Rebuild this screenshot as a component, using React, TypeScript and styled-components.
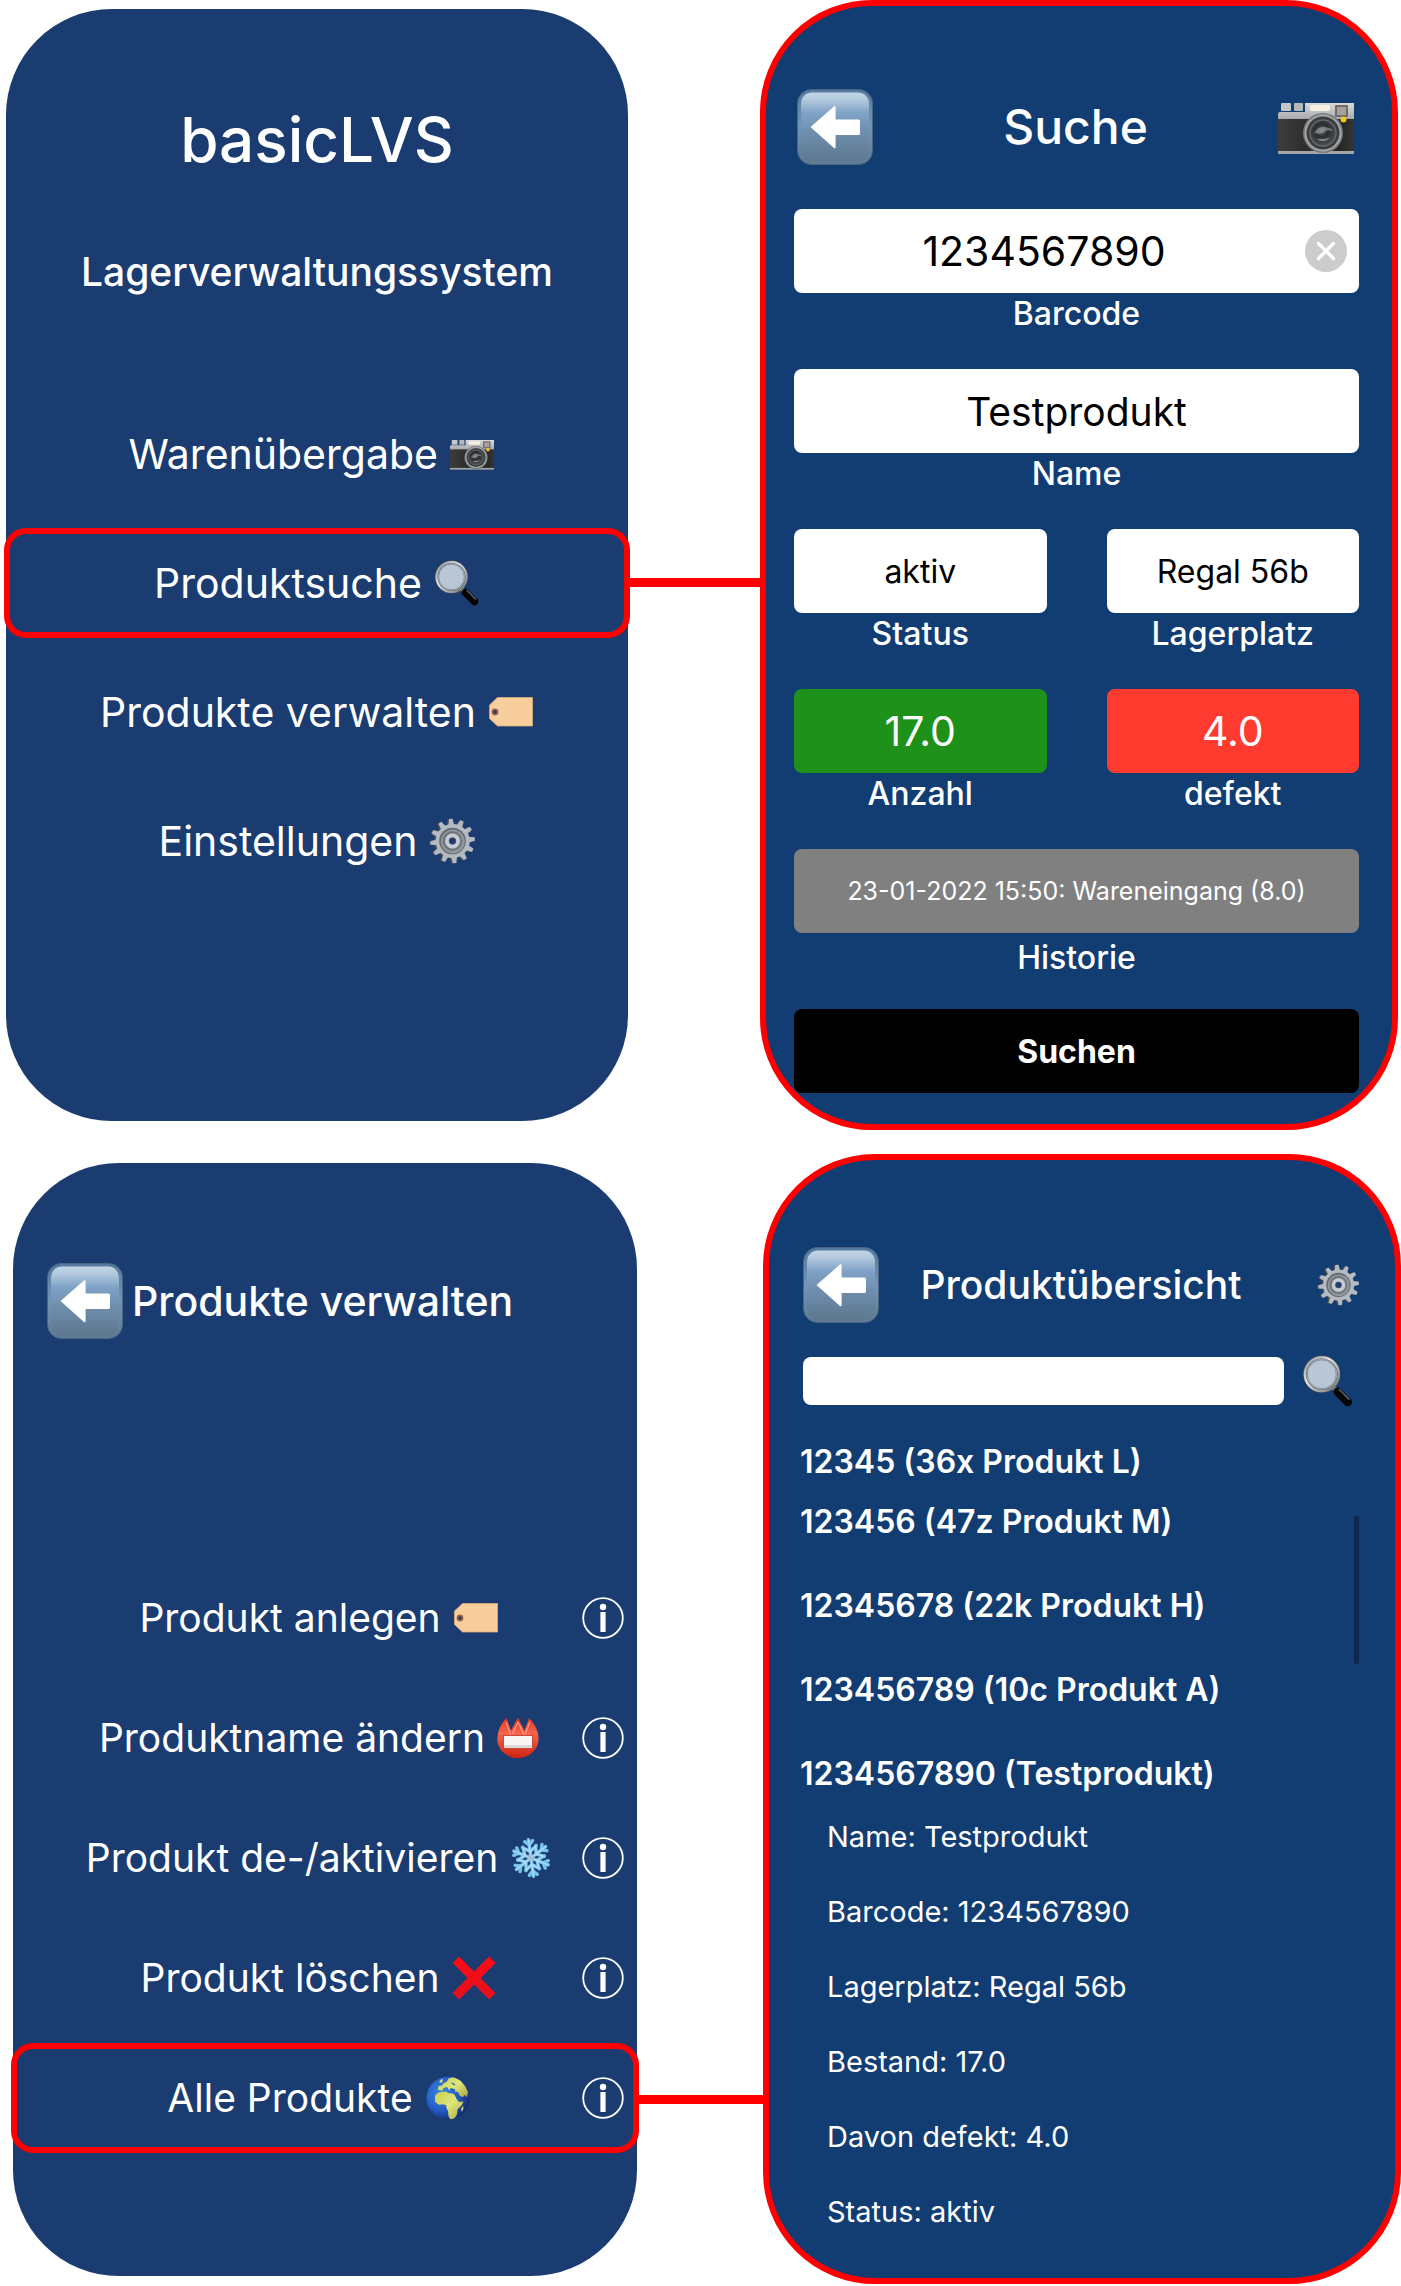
import React, { useState } from 'react';
import styled, { createGlobalStyle, css } from 'styled-components';

const RED = '#ff0000';
const NAVY = '#1a3c71';
const BLUE = '#113d73';

const GlobalStyle = createGlobalStyle`
  *, *::before, *::after { box-sizing: border-box; }
  body {
    margin: 0;
    background: #ffffff;
    color: #ffffff;
    font-family: Inter, "Liberation Sans", sans-serif;
  }
  button, input { font: inherit; color: inherit; }
  h1, h2, p, ul { margin: 0; padding: 0; }
  ul { list-style: none; }
`;

/* ---------- layout ---------- */

const Page = styled.main`
  display: flex;
  flex-direction: column;
  gap: 24px;
`;

const Flow = styled.section<{ $columns: string; $inset: string }>`
  display: grid;
  grid-template-columns: ${(p) => p.$columns};
  align-items: start;
  padding: ${(p) => p.$inset};
`;

const Connector = styled.div<{ $drop: number }>`
  height: 9px;
  margin-top: ${(p) => p.$drop}px;
  background: ${RED};
`;

const MenuPhone = styled.article<{ $pad: string }>`
  margin-top: 9px;
  padding: ${(p) => p.$pad};
  border-radius: 106px;
  background: ${NAVY};
`;

const FramedPhone = styled.article<{ $pad: string }>`
  padding: ${(p) => p.$pad};
  border: 6px solid ${RED};
  border-radius: 112px;
  background: ${BLUE};
  overflow: hidden;
`;

/* ---------- headings ---------- */

const AppTitle = styled.h1`
  font-size: 62px;
  line-height: 80px;
  font-weight: 500;
  text-align: center;
`;

const AppSubtitle = styled.p`
  margin-top: 68px;
  font-size: 39px;
  line-height: 48px;
  font-weight: 500;
  text-align: center;
`;

const Header = styled.header<{ $columns: string; $pad?: string }>`
  display: grid;
  grid-template-columns: ${(p) => p.$columns};
  align-items: center;
  height: 76px;
  padding: ${(p) => p.$pad ?? 0};
`;

const ScreenTitle = styled.h2<{ $size: number; $left?: boolean }>`
  font-size: ${(p) => p.$size}px;
  line-height: 60px;
  font-weight: 500;
  text-align: ${(p) => (p.$left ? 'left' : 'center')};
  white-space: nowrap;
`;

const IconButton = styled.button`
  display: flex;
  align-items: center;
  justify-content: center;
  justify-self: end;
  padding: 0;
  border: 0;
  background: none;
  cursor: pointer;

  &:first-child { justify-self: start; }
`;

/* ---------- menus ---------- */

const Menu = styled.ul<{ $gap: number; $top: number }>`
  display: flex;
  flex-direction: column;
  gap: ${(p) => p.$gap}px;
  margin: ${(p) => p.$top}px -2px 0;
`;

const MenuRow = styled.li<{ $active?: boolean; $withInfo?: boolean }>`
  display: grid;
  grid-template-columns: 1fr;
  align-items: center;
  height: 110px;
  border: 6px solid ${(p) => (p.$active ? RED : 'transparent')};
  border-radius: 22px;
  ${(p) =>
    p.$withInfo &&
    css`
      grid-template-columns: 1fr 42px;
      padding: 0 9px 0 39px;
    `}
`;

const MenuButton = styled.button<{ $size?: number }>`
  display: flex;
  align-items: center;
  justify-content: center;
  gap: 12px;
  padding: 0;
  border: 0;
  background: none;
  font-size: ${(p) => p.$size ?? 41}px;
  line-height: 52px;
  white-space: nowrap;
  cursor: pointer;
`;

const MenuIcon = styled.span`
  display: flex;
  align-items: center;
`;

/* ---------- search form ---------- */

const SearchForm = styled.form`
  display: flex;
  flex-direction: column;
  gap: 26px;
  margin-top: 44px;
`;

const Fields = styled.div`
  display: grid;
  grid-template-columns: 1fr 1fr;
  gap: 34px 60px;
`;

const Field = styled.div<{ $wide?: boolean }>`
  display: flex;
  flex-direction: column;
  min-width: 0;
  ${(p) => p.$wide && 'grid-column: 1 / -1;'}
`;

const Control = styled.div`
  position: relative;
  display: flex;
`;

const TextInput = styled.input<{ $bg?: string; $ink?: string; $size?: number; $clearable?: boolean }>`
  width: 100%;
  min-width: 0;
  height: 84px;
  padding: 0 ${(p) => (p.$clearable ? 65 : 0)}px 0 0;
  border: 0;
  border-radius: 8px;
  outline: 0;
  background: ${(p) => p.$bg ?? '#ffffff'};
  color: ${(p) => p.$ink ?? '#000000'};
  font-size: ${(p) => p.$size ?? 41}px;
  text-align: center;
`;

const ClearButton = styled.button`
  position: absolute;
  top: 21px;
  right: 12px;
  display: flex;
  padding: 0;
  border: 0;
  background: none;
  cursor: pointer;
`;

const FieldLabel = styled.label<{ $tall?: boolean }>`
  font-size: 32px;
  line-height: ${(p) => (p.$tall ? 50 : 42)}px;
  font-weight: 500;
  text-align: center;
`;

const SubmitButton = styled.button`
  height: 84px;
  border: 0;
  border-radius: 8px;
  background: #000000;
  font-size: 32px;
  font-weight: 700;
  cursor: pointer;
`;

/* ---------- product overview ---------- */

const SearchBar = styled.form`
  display: grid;
  grid-template-columns: 1fr 52px;
  align-items: center;
  gap: 18px;
  height: 52px;
  margin-top: 32px;
  padding-right: 5px;
`;

const SearchInput = styled.input`
  width: 100%;
  height: 48px;
  padding: 0 16px;
  border: 0;
  border-radius: 8px;
  outline: 0;
  background: #ffffff;
  color: #000000;
  font-size: 29px;
`;

const ProductPane = styled.div`
  position: relative;
  margin: 34px 0 0 -3px;
`;

const ProductButton = styled.button`
  display: block;
  padding: 0;
  border: 0;
  background: none;
  font-size: 32px;
  line-height: 42px;
  font-weight: 600;
  white-space: nowrap;
  cursor: pointer;
`;

const ProductList = styled.ul`
  display: flex;
  flex-direction: column;
  gap: 42px;
  margin-top: 18px;
`;

const Details = styled.ul`
  padding: 4px 0 0 27px;
`;

const Detail = styled.li`
  font-size: 29px;
  line-height: 75px;
  white-space: nowrap;
`;

const ScrollThumb = styled.div`
  position: absolute;
  top: 75px;
  right: 0;
  width: 5px;
  height: 148px;
  border-radius: 3px;
  background: #0c2850;
`;

/* ---------- icons ---------- */

const BackIcon = () => (
  <svg width="76" height="76" viewBox="0 0 76 76" aria-hidden="true">
    <defs>
      <linearGradient id="back-face" x1="0" y1="0" x2="0" y2="1">
        <stop offset="0" stopColor="#c3d6e7" />
        <stop offset="0.1" stopColor="#b3cade" />
        <stop offset="0.3" stopColor="#7fa2c6" />
        <stop offset="0.55" stopColor="#7090b0" />
        <stop offset="1" stopColor="#5d788f" />
      </linearGradient>
      <linearGradient id="back-rim" x1="0" y1="0" x2="0" y2="1">
        <stop offset="0" stopColor="#55799d" />
        <stop offset="0.5" stopColor="#7395b6" />
        <stop offset="1" stopColor="#5f7a92" />
      </linearGradient>
    </defs>
    <rect x="0.5" y="0.5" width="75" height="75" rx="14" fill="url(#back-rim)" stroke="#4a6787" />
    <rect x="4" y="3.5" width="68" height="69" rx="11" fill="url(#back-face)" />
    <path d="M13.5 38 37 17.5c1-.8 1.6-.2 1.6 1v12H61c1.4 0 2 .6 2 2V44c0 1.4-.6 2-2 2H38.600v12c0 1.200-.6 1.800-1.600 1Z" fill="#ffffff" />
  </svg>
);

const CameraIcon = ({ size }: { size: number }) => (
  <svg width={size} height={size} viewBox="0 0 76 76" aria-hidden="true">
    <defs>
      <linearGradient id="cam-top" x1="0" y1="0" x2="0" y2="1">
        <stop offset="0" stopColor="#d9dadb" />
        <stop offset="1" stopColor="#9b9da0" />
      </linearGradient>
      <linearGradient id="cam-body" x1="0" y1="0" x2="1" y2="0">
        <stop offset="0" stopColor="#3d3d3d" />
        <stop offset="0.45" stopColor="#2a2a2a" />
        <stop offset="0.55" stopColor="#111111" />
        <stop offset="1" stopColor="#353535" />
      </linearGradient>
      <radialGradient id="cam-glass" cx="0.45" cy="0.4" r="0.6">
        <stop offset="0" stopColor="#6e7274" />
        <stop offset="0.4" stopColor="#2b2d2f" />
        <stop offset="1" stopColor="#4c5053" />
      </radialGradient>
    </defs>
    <rect x="3" y="14" width="10" height="8" rx="1" fill="#c4c6c8" />
    <rect x="16" y="14" width="9" height="8" rx="1" fill="#b4b6b8" />
    <path d="M0 25q0-2 2-2h25v-9h49v20H0Z" fill="url(#cam-top)" />
    <rect x="0" y="30" width="76" height="34" fill="url(#cam-body)" />
    <rect x="0" y="62" width="76" height="3" fill="#a2a6aa" />
    <rect x="32" y="16" width="20" height="6" rx="2" fill="#f5f0e2" />
    <rect x="57" y="16" width="13" height="12" rx="1" fill="#6f6b68" />
    <rect x="59" y="18" width="9" height="8" fill="#a8a09a" />
    <circle cx="45" cy="44" r="20" fill="#77797b" />
    <circle cx="45" cy="44" r="18.500" fill="#a4a6a8" />
    <circle cx="45" cy="44" r="16.500" fill="#3b3d3f" />
    <circle cx="45" cy="44" r="13" fill="url(#cam-glass)" stroke="#63676a" strokeWidth="1.500" />
    <path d="M36 44q4-7 11-6t8 4q-7-2-9 1t-10 1Z" fill="#a1a5a8" opacity="0.6" />
    <path d="M39 50q7 5 13-1-5 1-13 1Z" fill="#b5b9bb" opacity="0.6" />
    <circle cx="65.500" cy="30.500" r="3" fill="#f6c51d" />
  </svg>
);

const MagnifierIcon = ({ size }: { size: number }) => (
  <svg width={size} height={size} viewBox="0 0 46 46" aria-hidden="true">
    <defs>
      <linearGradient id="lens-rim" x1="0" y1="0" x2="1" y2="1">
        <stop offset="0" stopColor="#8b8f94" />
        <stop offset="0.4" stopColor="#e4e6e8" />
        <stop offset="1" stopColor="#6b6d70" />
      </linearGradient>
    </defs>
    <path d="m27 28 4 4" stroke="#8a8d90" strokeWidth="4" />
    <path d="m31.500 32.500 9 9" stroke="#050505" strokeWidth="7.500" strokeLinecap="round" />
    <path d="m33 30.500 8.500 8.500" stroke="#5d6064" strokeWidth="1.500" strokeLinecap="round" />
    <circle cx="17.500" cy="17" r="15" fill="#b9c6d5" stroke="#55585c" strokeWidth="3" />
    <circle cx="17.500" cy="17" r="15" fill="none" stroke="url(#lens-rim)" strokeWidth="2" />
    <circle cx="17.500" cy="17" r="12.800" fill="none" stroke="#808890" strokeWidth="0.800" />
  </svg>
);

const TagIcon = () => (
  <svg width="46" height="46" viewBox="0 0 46 46" aria-hidden="true">
    <path d="M9.500 8.500h35v28.500h-35l-8-7.500V16Z" fill="#f8cf9c" stroke="#d9ac78" strokeWidth="0.800" />
    <circle cx="7" cy="23" r="3.400" fill="#9c6247" />
    <circle cx="7" cy="23" r="1.800" fill="#1a3c71" />
  </svg>
);

const TEETH = Array.from({ length: 12 }, (_, i) => i * 30 - 5);

const GearIcon = ({ size }: { size: number }) => (
  <svg width={size} height={size} viewBox="0 0 46 46" aria-hidden="true">
    {['#54504d', '#b4bac2'].map((fill, layer) => (
      <g key={fill} fill={fill} transform={layer ? 'translate(0.700 0)' : 'translate(-0.800 0.300)'}>
        {TEETH.map((angle) => (
          <path key={angle} d="M20 8 21.200.8h3.600L26 8Z" transform={`rotate(${angle} 23 23)`} />
        ))}
        <circle cx="23" cy="23" r="17" />
      </g>
    ))}
    <circle cx="23.500" cy="23" r="13.300" fill="#62676c" />
    <circle cx="23.800" cy="23.400" r="12" fill="#8f969d" />
    <circle cx="23.500" cy="23" r="9.800" fill="#6d7379" />
    <circle cx="23.800" cy="23" r="8" fill="#858c93" />
    <circle cx="23.500" cy="23" r="5.400" fill="none" stroke="#c7ccd4" strokeWidth="4" />
    <circle cx="23.500" cy="23" r="3.300" fill="#1a3c71" stroke="#50545a" strokeWidth="0.800" />
  </svg>
);

const BadgeIcon = () => (
  <svg width="42" height="42" viewBox="2 2 42 42" aria-hidden="true">
    <defs>
      <linearGradient id="badge" x1="0" y1="0" x2="0" y2="1">
        <stop offset="0" stopColor="#e8321d" />
        <stop offset="0.4" stopColor="#f4664d" />
        <stop offset="1" stopColor="#d0230f" />
      </linearGradient>
    </defs>
    <path d="M11.500 3 16 15.500 22.800 2.500 29.500 15.500 34 3C40 9 44 17 43.500 25 43 35 34 43 23 43S2.500 35 2.300 25C2.200 17 5.500 9 11.500 3Z" fill="url(#badge)" />
    <path d="m11 7 4.500 13M23 7l-5.500 12M23 7l5.500 12M34.800 7l-5 13" stroke="#ff9a86" strokeWidth="1.200" fill="none" />
    <rect x="8.500" y="20.500" width="29" height="13" fill="#f7f6f5" stroke="#c53322" strokeWidth="0.800" />
    <rect x="9" y="30" width="28" height="3" fill="#dcdad9" />
  </svg>
);

const ARMS = [-8, 52, 112, 172, 232, 292];

const SnowflakeIcon = () => (
  <svg width="42" height="42" viewBox="2 2 42 42" aria-hidden="true">
    <g fill="none" stroke="#79c3ee" strokeWidth="3.400" strokeLinecap="round">
      {ARMS.map((angle) => (
        <path key={angle} d="M23 23V4.500M23 16.500l-7-5M23 16.500l7-5M23 10l-4-4M23 10l4-4" transform={`rotate(${angle} 23 23)`} />
      ))}
    </g>
    <g fill="none" stroke="#b9e1f6" strokeWidth="1" strokeLinecap="round">
      {ARMS.map((angle) => (
        <path key={angle} d="M23 21V4.500M23 16.500l-6.500-4.500M23 16.500l6.500-4.500" transform={`rotate(${angle} 23 23)`} />
      ))}
    </g>
    <circle cx="23" cy="23" r="3.500" fill="#a3bfd9" />
  </svg>
);

const CrossIcon = () => (
  <svg width="46" height="46" viewBox="0 0 46 46" aria-hidden="true">
    <defs>
      <linearGradient id="cross" x1="0" y1="0" x2="0" y2="1">
        <stop offset="0" stopColor="#ff0a14" />
        <stop offset="1" stopColor="#e3101c" />
      </linearGradient>
    </defs>
    <path d="M8 1.500 23 16.500 38 1.500 44.500 8 29.500 23l15 15L38 44.500 23 29.500 8 44.500 1.500 38l15-15L1.500 8Z" fill="url(#cross)" />
  </svg>
);

const GlobeIcon = () => (
  <svg width="46" height="46" viewBox="0 0 46 46" aria-hidden="true">
    <defs>
      <radialGradient id="ocean" cx="0.35" cy="0.4" r="0.68">
        <stop offset="0" stopColor="#3b8be6" />
        <stop offset="0.6" stopColor="#2459c0" />
        <stop offset="1" stopColor="#142a6c" />
      </radialGradient>
      <linearGradient id="land" x1="0" y1="0" x2="1" y2="1">
        <stop offset="0" stopColor="#c8cf4d" />
        <stop offset="0.5" stopColor="#dfe57a" />
        <stop offset="1" stopColor="#a9a43f" />
      </linearGradient>
      <clipPath id="globe-disc"><circle cx="23" cy="23" r="21.500" /></clipPath>
    </defs>
    <circle cx="23" cy="23" r="21.500" fill="url(#ocean)" />
    <g clipPath="url(#globe-disc)" fill="url(#land)">
      <path d="M10 21q2-4 7-4l4-.5 2 1.500 4 .5 3 1 1.500 4 2.500 3.500 4.500-.5-2 4-4 4-.5 5-3 4.500-3.500.8-2-3.800-.5-5-1.500-3-.5-3-3-.8-4 .6-3.800-2.800Z" />
      <path d="m13 15 .5-4 3.500-.5 2-2.500 3-1.500 1.500-3L29 2l6 3 5 6 3 6-1 5-2.500-2-1.500 2-3-1-2-4-3-.5-1-2.500-3-.5-1.500 2-2.500-3.500-3.500 1-1 2.500Z" />
      <path d="m14 7 2.500-3 1.500.5-1 3.500Z" />
      <path d="m36 34 2-3 .5 2-1.500 4Z" />
    </g>
    <path d="m25 14 5 1M30 19l3 6M27 8l3 2" stroke="#2459c0" strokeWidth="1.300" fill="none" />
  </svg>
);

const InfoIcon = () => (
  <svg width="42" height="42" viewBox="0 0 42 42" aria-hidden="true">
    <circle cx="21" cy="21" r="19.800" fill="none" stroke="#ffffff" strokeWidth="1.800" />
    <circle cx="21" cy="10" r="3.200" fill="#ffffff" />
    <rect x="18.400" y="15" width="5.200" height="20" fill="#ffffff" />
  </svg>
);

const ClearIcon = () => (
  <svg width="42" height="42" viewBox="0 0 42 42" aria-hidden="true">
    <circle cx="21" cy="21" r="21" fill="#cccccc" />
    <path d="m13.500 13.500 15 15m0-15-15 15" stroke="#ffffff" strokeWidth="3.400" strokeLinecap="round" />
  </svg>
);

/* ---------- data ---------- */

const mainMenu = [
  { label: 'Warenübergabe', icon: <><CameraIcon size={44} />{'\u00a0'}</> },
  { label: 'Produktsuche', icon: <MagnifierIcon size={46} />, active: true },
  { label: 'Produkte verwalten', icon: <TagIcon /> },
  { label: 'Einstellungen', icon: <GearIcon size={46} /> },
];

const manageMenu = [
  { label: 'Produkt anlegen', icon: <TagIcon /> },
  { label: 'Produktname ändern', icon: <BadgeIcon /> },
  { label: 'Produkt de-/aktivieren', icon: <SnowflakeIcon /> },
  { label: 'Produkt löschen', icon: <CrossIcon /> },
  { label: 'Alle Produkte', icon: <GlobeIcon />, active: true },
];

const products = ['123456 (47z Produkt M)', '12345678 (22k Produkt H)', '123456789 (10c Produkt A)'];

const details = [
  'Name: Testprodukt',
  'Barcode: 1234567890',
  'Lagerplatz: Regal 56b',
  'Bestand: 17.0',
  'Davon defekt: 4.0',
  'Status: aktiv',
];

/* ---------- screens ---------- */

const HomeScreen = () => (
  <MenuPhone $pad="91px 0 225px">
    <AppTitle>basicLVS</AppTitle>
    <AppSubtitle>Lagerverwaltungssystem</AppSubtitle>
    <Menu $gap={19} $top={103}>
      {mainMenu.map((item) => (
        <MenuRow key={item.label} $active={item.active}>
          <MenuButton type="button">
            {item.label}
            <MenuIcon>{item.icon}</MenuIcon>
          </MenuButton>
        </MenuRow>
      ))}
    </Menu>
  </MenuPhone>
);

const SearchScreen = () => {
  const [barcode, setBarcode] = useState('1234567890');
  return (
    <FramedPhone $pad="83px 33px 31px 28px">
      <Header $columns="80px 1fr 80px" $pad="0 5px 0 3px">
        <IconButton type="button" aria-label="Zurück"><BackIcon /></IconButton>
        <ScreenTitle $size={48}>Suche</ScreenTitle>
        <IconButton type="button" aria-label="Scannen"><CameraIcon size={76} /></IconButton>
      </Header>
      <SearchForm onSubmit={(e) => e.preventDefault()}>
        <Fields>
          <Field $wide>
            <Control>
              <TextInput id="barcode" $clearable value={barcode} onChange={(e) => setBarcode(e.target.value)} />
              <ClearButton type="button" aria-label="Löschen" onClick={() => setBarcode('')}><ClearIcon /></ClearButton>
            </Control>
            <FieldLabel htmlFor="barcode">Barcode</FieldLabel>
          </Field>
          <Field $wide>
            <TextInput id="name" $size={39} defaultValue="Testprodukt" />
            <FieldLabel htmlFor="name">Name</FieldLabel>
          </Field>
          <Field>
            <TextInput id="status" $size={32} defaultValue="aktiv" />
            <FieldLabel htmlFor="status">Status</FieldLabel>
          </Field>
          <Field>
            <TextInput id="place" $size={32} defaultValue="Regal 56b" />
            <FieldLabel htmlFor="place">Lagerplatz</FieldLabel>
          </Field>
          <Field>
            <TextInput id="count" $bg="#1e911b" $ink="#ffffff" defaultValue="17.0" />
            <FieldLabel htmlFor="count">Anzahl</FieldLabel>
          </Field>
          <Field>
            <TextInput id="broken" $bg="#ff3b30" $ink="#ffffff" defaultValue="4.0" />
            <FieldLabel htmlFor="broken">defekt</FieldLabel>
          </Field>
          <Field $wide>
            <TextInput id="history" $bg="#808080" $ink="#ffffff" $size={25} readOnly value="23-01-2022 15:50: Wareneingang (8.0)" />
            <FieldLabel htmlFor="history" $tall>Historie</FieldLabel>
          </Field>
        </Fields>
        <SubmitButton type="submit">Suchen</SubmitButton>
      </SearchForm>
    </FramedPhone>
  );
};

const ManageScreen = () => (
  <MenuPhone $pad="100px 0 123px">
    <Header $columns="85px 1fr" $pad="0 0 0 34px">
      <IconButton type="button" aria-label="Zurück"><BackIcon /></IconButton>
      <ScreenTitle $size={41} $left>Produkte verwalten</ScreenTitle>
    </Header>
    <Menu $gap={10} $top={224}>
      {manageMenu.map((item) => (
        <MenuRow key={item.label} $active={item.active} $withInfo>
          <MenuButton type="button" $size={39}>
            {item.label}
            <MenuIcon>{item.icon}</MenuIcon>
          </MenuButton>
          <IconButton type="button" aria-label={`Info: ${item.label}`}><InfoIcon /></IconButton>
        </MenuRow>
      ))}
    </Menu>
  </MenuPhone>
);

const OverviewScreen = () => (
  <FramedPhone $pad="87px 36px 29px 34px">
    <Header $columns="76px 1fr 76px">
      <IconButton type="button" aria-label="Zurück"><BackIcon /></IconButton>
      <ScreenTitle $size={39}>Produktübersicht</ScreenTitle>
      <IconButton type="button" aria-label="Einstellungen"><GearIcon size={42} /></IconButton>
    </Header>
    <SearchBar onSubmit={(e) => e.preventDefault()}>
      <SearchInput type="text" aria-label="Produkt suchen" />
      <IconButton type="submit" aria-label="Suchen"><MagnifierIcon size={52} /></IconButton>
    </SearchBar>
    <ProductPane>
      <ProductButton type="button">12345 (36x Produkt L)</ProductButton>
      <ProductList>
        {products.map((name) => (
          <li key={name}><ProductButton type="button">{name}</ProductButton></li>
        ))}
        <li>
          <ProductButton type="button" aria-expanded="true">1234567890 (Testprodukt)</ProductButton>
          <Details>
            {details.map((line) => (
              <Detail key={line}>{line}</Detail>
            ))}
          </Details>
        </li>
      </ProductList>
      <ScrollThumb />
    </ProductPane>
  </FramedPhone>
);

export default function App() {
  return (
    <>
      <GlobalStyle />
      <Page>
        <Flow $columns="622fr 132fr 638fr" $inset="0 3px 0 6px">
          <HomeScreen />
          <Connector $drop={578} />
          <SearchScreen />
        </Flow>
        <Flow $columns="624fr 126fr 638fr" $inset="0 0 0 13px">
          <ManageScreen />
          <Connector $drop={941} />
          <OverviewScreen />
        </Flow>
      </Page>
    </>
  );
}
